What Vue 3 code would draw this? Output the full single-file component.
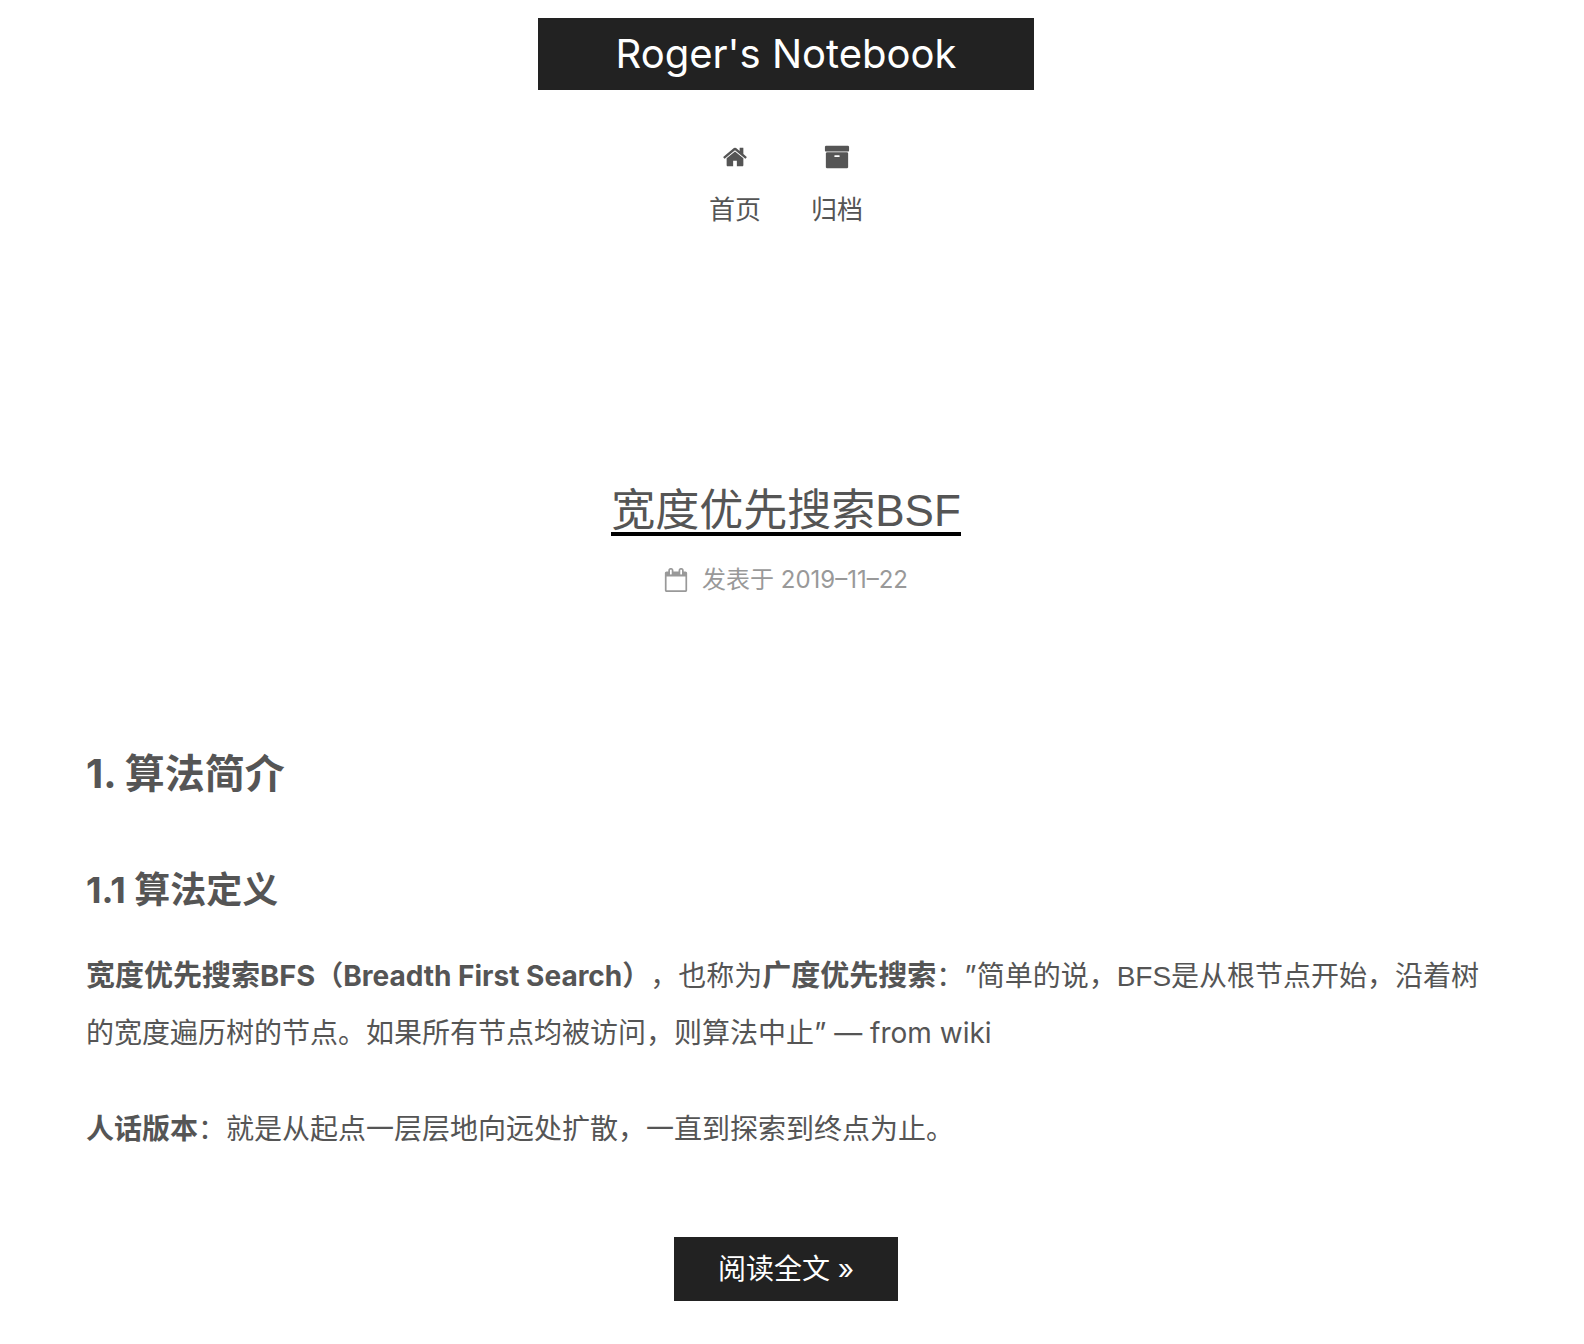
<script setup>
const menu = [
  {
    label: '首页',
    icon: 'M1472 992v480q0 26-19 45t-45 19h-384v-384h-256v384h-384q-26 0-45-19t-19-45v-480q0-1 .5-3t.5-3l575-474 575 474q1 2 1 6zm223-69l-62 74q-8 9-21 11h-3q-13 0-21-7l-692-577-692 577q-12 8-24 7-13-2-21-11l-62-74q-8-10-7-23.5t11-21.5l719-599q32-26 76-26t76 26l244 204v-195q0-14 9-23t23-9h192q14 0 23 9t9 23v408l219 182q10 8 11 21.5t-7 23.5z',
  },
  {
    label: '归档',
    icon: 'M1088 832q0-26-19-45t-45-19h-256q-26 0-45 19t-19 45 19 45 45 19h256q26 0 45-19t19-45zm576-192v960q0 26-19 45t-45 19h-1408q-26 0-45-19t-19-45v-960q0-26 19-45t45-19h1408q26 0 45 19t19 45zm64-448v256q0 26-19 45t-45 19h-1536q-26 0-45-19t-19-45v-256q0-26 19-45t45-19h1536q26 0 45 19t19 45z',
  },
]
</script>

<template>
  <div class="page">
    <header class="header">
      <a class="brand" href="#">Roger's Notebook</a>
      <nav class="menu">
        <a v-for="item in menu" :key="item.label" class="menu-item" href="#">
          <svg class="menu-icon" viewBox="0 0 1792 1792" aria-hidden="true"><path :d="item.icon" /></svg>
          <span>{{ item.label }}</span>
        </a>
      </nav>
    </header>

    <main class="content">
      <article>
        <header class="post-header">
          <h1 class="post-title"><a href="#">宽度优先搜索<span class="latin">BSF</span></a></h1>
          <div class="post-meta">
            <svg class="meta-icon" viewBox="0 0 1792 1792" aria-hidden="true">
              <path d="M192 1664h1408v-1024h-1408v1024zm384-1216v-288q0-14-9-23t-23-9h-64q-14 0-23 9t-9 23v288q0 14 9 23t23 9h64q14 0 23-9t9-23zm768 0v-288q0-14-9-23t-23-9h-64q-14 0-23 9t-9 23v288q0 14 9 23t23 9h64q14 0 23-9t9-23zm384-64v1280q0 52-38 90t-90 38h-1408q-52 0-90-38t-38-90v-1280q0-52 38-90t90-38h128v-96q0-66 47-113t113-47h64q66 0 113 47t47 113v96h384v-96q0-66 47-113t113-47h64q66 0 113 47t47 113v96h128q52 0 90 38t38 90z" />
            </svg>
            <span>发表于 <time datetime="2019-11-22">2019–11–22</time></span>
          </div>
        </header>

        <div class="post-body">
          <h2>1. 算法简介</h2>
          <h3>1.1 算法定义</h3>
          <p><strong><span class="term">宽度优先搜索BFS</span>（Breadth First Search）</strong>，也称为<strong class="term">广度优先搜索</strong>：”简单的说，<span class="latin">BFS</span>是从根节点开始，沿着树的宽度遍历树的节点。如果所有节点均被访问，则算法中止” — from wiki</p>
          <p><strong>人话版本</strong>：就是从起点一层层地向远处扩散，一直到探索到终点为止。</p>
        </div>

        <footer class="post-footer">
          <a class="more" href="#">阅读全文 »</a>
        </footer>
      </article>
    </main>
  </div>
</template>

<style>
body {
  margin: 0;
  background: #fff;
}
</style>

<style scoped>
.page {
  padding: 18px 12px 44px 0;
  color: #555;
  font-family: Inter, "Noto Sans CJK SC", sans-serif;
  font-size: 28px;
  line-height: 56px;
  text-spacing-trim: space-all;
}

a {
  color: inherit;
  text-decoration: none;
}

.header {
  display: flex;
  flex-direction: column;
  align-items: center;
}

.brand {
  padding: 0 78px;
  background: #222;
  color: #fff;
  font-size: 40px;
  line-height: 72px;
}

.menu {
  display: flex;
  gap: 50px;
  margin-top: 42px;
}

.menu-item {
  display: flex;
  flex-direction: column;
  align-items: center;
  font-size: 26px;
  line-height: 52px;
}

.menu-icon {
  width: 26px;
  height: 26px;
  margin: 12px 0 14px;
  fill: currentColor;
}

.content {
  max-width: 1400px;
  margin: 0 auto;
  padding: 253px 40px 0;
}

.post-header {
  display: flex;
  flex-direction: column;
  align-items: center;
}

.post-title {
  margin: 0;
  font-size: 44px;
  font-weight: 400;
}

.post-title a {
  display: block;
  border-bottom: 4px solid #000;
  line-height: 42px;
}

.latin {
  font-family: "Liberation Sans", Arial, sans-serif;
}

.post-meta {
  display: flex;
  align-items: center;
  gap: 14px;
  margin-top: 20px;
  color: #999;
  font-size: 24px;
  line-height: 48px;
}

.meta-icon {
  width: 24px;
  height: 24px;
  fill: currentColor;
}

.post-body {
  margin-top: 140px;
}

h2,
h3 {
  margin: 0;
  font-weight: 700;
  line-height: 60px;
}

h2 {
  font-size: 40px;
}

h3 {
  margin-top: 56px;
  font-size: 36px;
}

p {
  margin: 28px 0 40px;
}

.term {
  font-size: 29px;
}

.post-footer {
  display: flex;
  justify-content: center;
  margin-top: 80px;
}

.more {
  padding: 0 44px;
  background: #222;
  color: #fff;
  line-height: 64px;
}
</style>
